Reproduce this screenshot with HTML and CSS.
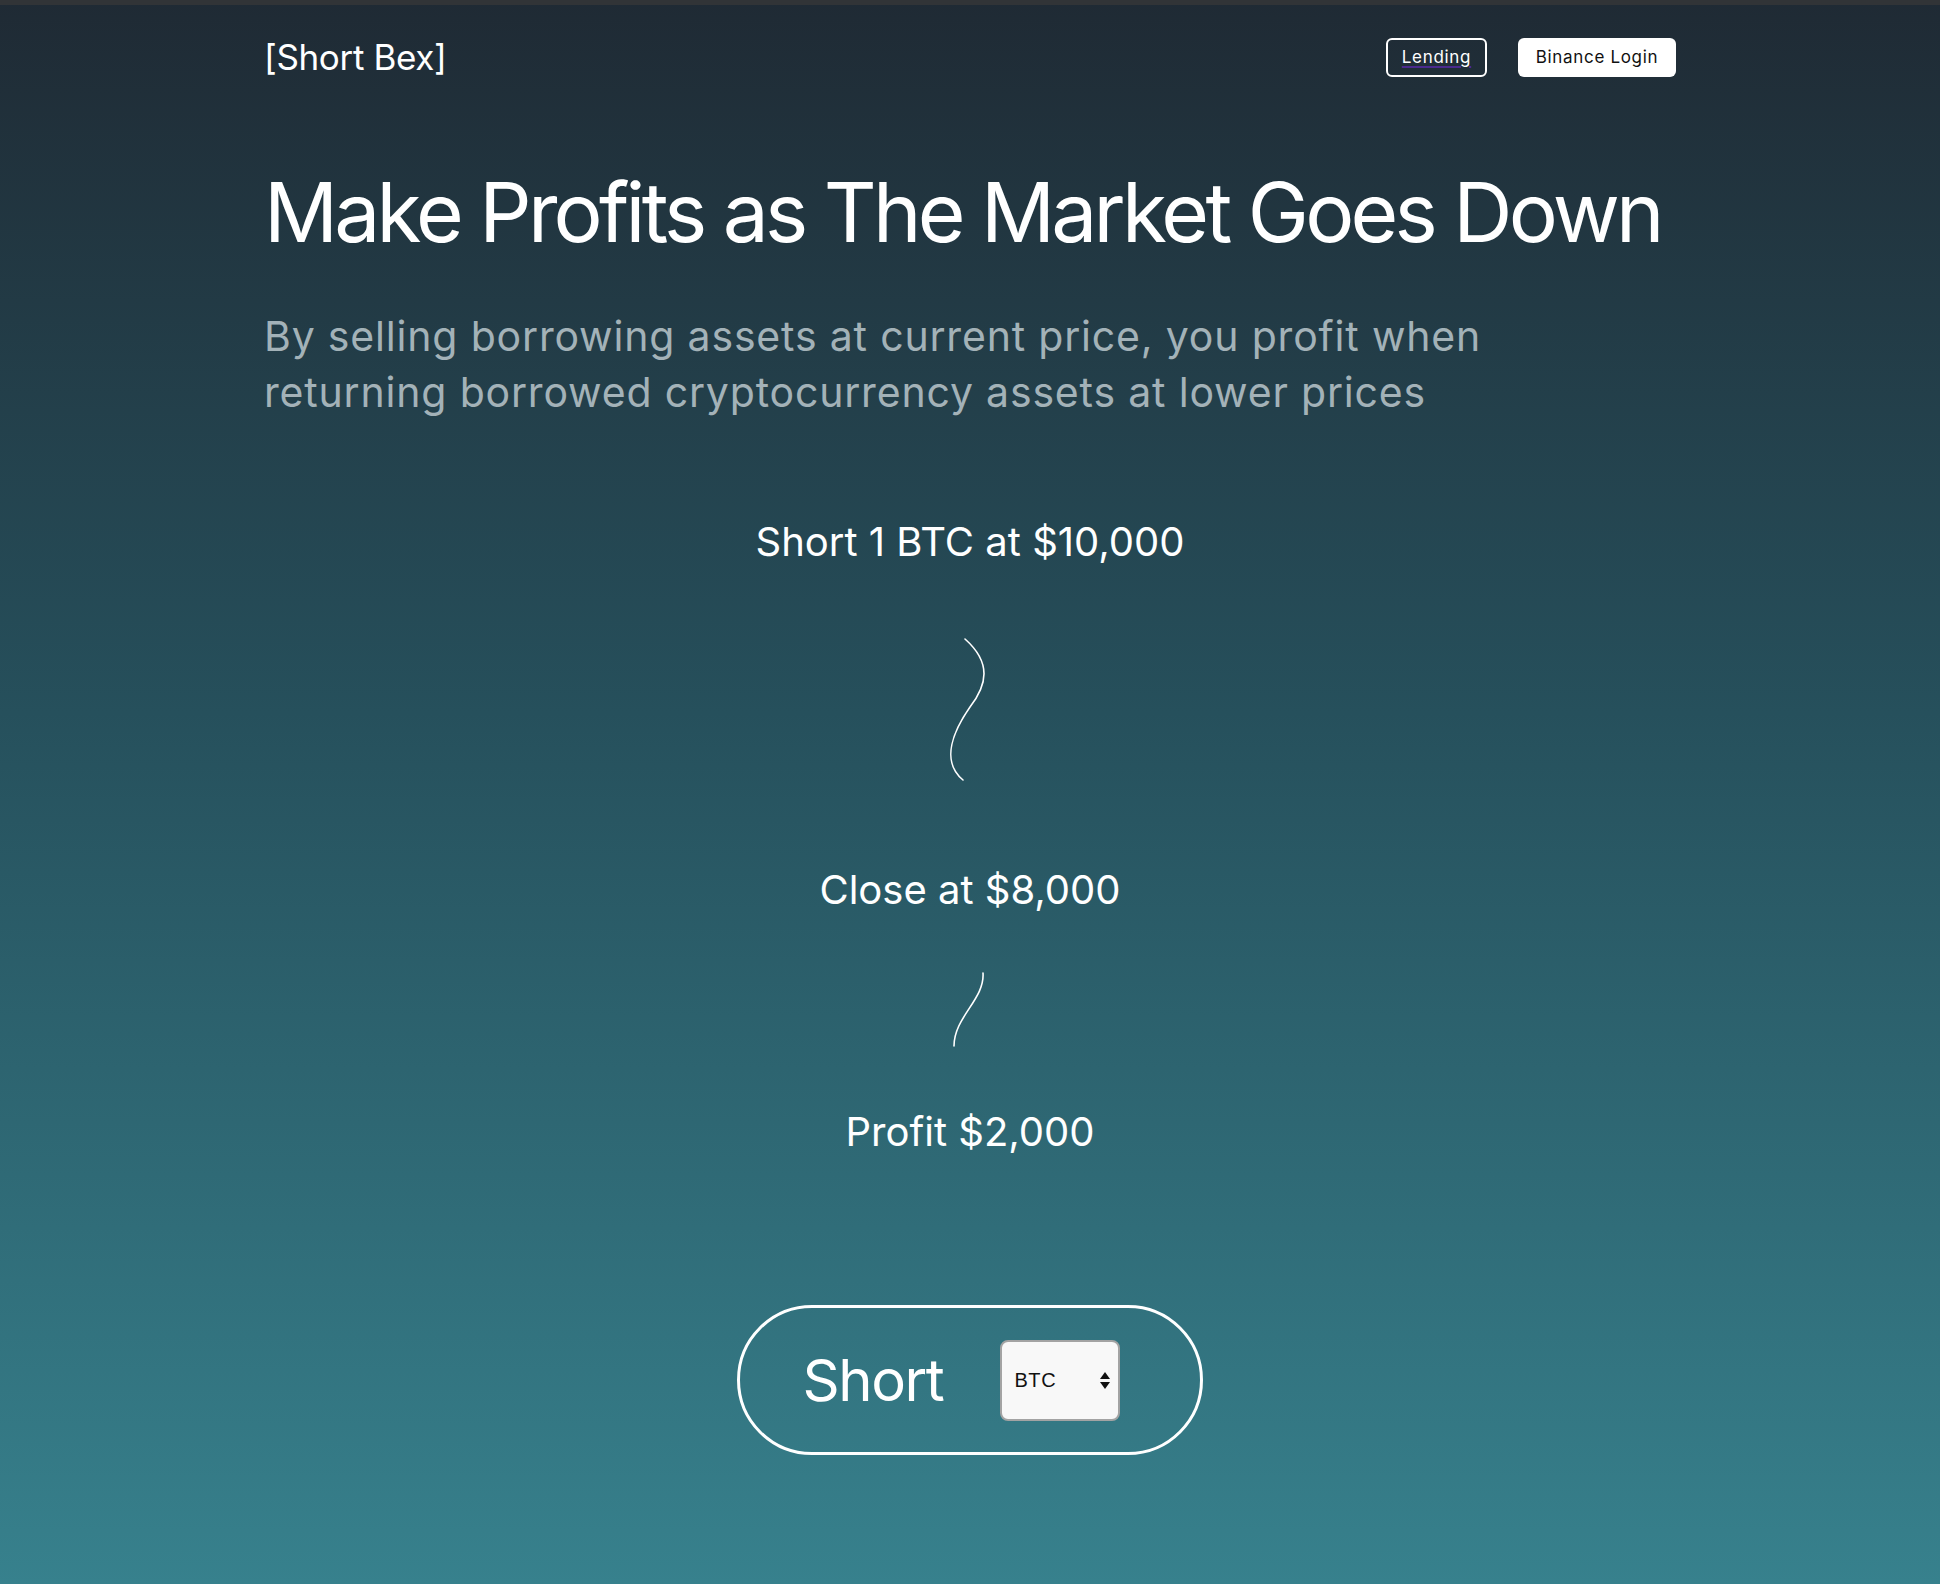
FILE: index.html
```html
<!DOCTYPE html>
<html lang="en">
  <head>
    <meta charset="UTF-8" />
    <meta name="viewport" content="width=device-width, initial-scale=1.0" />
    <title>Short Bex</title>
    <link rel="stylesheet" href="styles.css">
  </head>
  <body>
    <div class="container">
      <header class="top-bar">
        <div class="logo">[Short Bex]</div>
        <nav class="nav">
          <a href="#" class="nav-button outline">Lending</a>
          <a href="#" class="nav-button solid">Binance Login</a>
        </nav>
      </header>

      <h1 class="headline">Make Profits as The Market Goes Down</h1>
      <p class="subtitle">
        By selling borrowing assets at current price, you profit when
        returning borrowed cryptocurrency assets at lower prices
      </p>

      <div class="steps">
        <div class="step">Short 1 BTC at $10,000</div>
        <svg class="curve curve-long" width="60" height="150" viewBox="0 0 60 150">
          <path d="M25,4 C52,28 47,50 30,72 C14,95 0,126 23,145" />
        </svg>
        <div class="step step-close">Close at $8,000</div>
        <svg class="curve curve-short" width="60" height="82" viewBox="0 0 60 82">
          <path d="M43,4 C45,30 14,48 14,77" />
        </svg>
        <div class="step step-profit">Profit $2,000</div>
      </div>

      <div class="short-box">
        <span class="short-label">Short</span>
        <div class="coin-select">
          <select id="coin">
            <option value="BTC">BTC</option>
            <option value="ETH">ETH</option>
          </select>
          <svg class="select-arrows" width="10" height="18" viewBox="0 0 10 18">
            <path d="M5,0 L10,7 L0,7 Z" />
            <path d="M0,10 L10,10 L5,17 Z" />
          </svg>
        </div>
      </div>
    </div>
  </body>
</html>
```
FILE: styles.css
```css
* {
  margin: 0;
  padding: 0;
  box-sizing: border-box;
}

body {
  font-family: Inter, "Noto Sans", sans-serif;
  color: #fff;
  min-height: 100vh;
  background: linear-gradient(180deg, #1f2a34 0%, #26505c 45%, #37818d 100%);
  border-top: 5px solid #313437;
}

.container {
  width: 1412px;
  margin: 0 auto;
  padding-bottom: 100px;
}

.top-bar {
  display: flex;
  justify-content: space-between;
  align-items: center;
  padding-top: 31px;
}

.logo {
  font-size: 35px;
  font-weight: 400;
  letter-spacing: -0.01em;
}

.nav {
  display: flex;
  gap: 31px;
}

.nav-button {
  display: flex;
  align-items: center;
  justify-content: center;
  height: 39px;
  border-radius: 6px;
  font-size: 17px;
  letter-spacing: 0.04em;
  text-decoration: none;
}

.nav-button.outline {
  width: 101px;
  border: 2px solid #fff;
  color: #fff;
  text-decoration: underline;
  text-decoration-color: #4b2a8e;
  text-decoration-thickness: 2px;
  text-underline-offset: 3px;
}

.nav-button.solid {
  width: 158px;
  background: #fff;
  color: #111;
}

.headline {
  margin-top: 86px;
  font-size: 82px;
  font-weight: 400;
  line-height: 1.2;
  letter-spacing: -0.046em;
  white-space: nowrap;
}

.subtitle {
  margin-top: 46px;
  max-width: 1320px;
  font-size: 41px;
  line-height: 56px;
  letter-spacing: 0.02em;
  color: #a3b2b8;
}

.steps {
  display: flex;
  flex-direction: column;
  align-items: center;
  margin-top: 98px;
}

.step {
  font-size: 40px;
  line-height: 1.2;
}

.curve {
  display: block;
  fill: none;
  stroke: #fff;
  stroke-width: 1.6;
  stroke-linecap: round;
}

.curve-long {
  margin-top: 69px;
}

.step-close {
  margin-top: 81px;
}

.curve-short {
  margin-top: 55px;
}

.step-profit {
  margin-top: 57px;
}

.short-box {
  display: flex;
  align-items: center;
  width: fit-content;
  height: 150px;
  margin: 149px auto 0;
  padding: 0 80px 0 63px;
  border: 3px solid #fff;
  border-radius: 75px;
}

.short-label {
  font-size: 58px;
  line-height: 1;
  letter-spacing: -0.025em;
}

.coin-select {
  position: relative;
  margin-left: 57px;
}

.coin-select select {
  display: block;
  width: 120px;
  height: 81px;
  padding-left: 12px;
  appearance: none;
  -webkit-appearance: none;
  background: #f8f8f8;
  border: 2px solid #a3a3a3;
  border-radius: 8px;
  font-family: "Liberation Sans", Arial, sans-serif;
  font-size: 20px;
  letter-spacing: 0.03em;
  color: #111;
  outline: none;
}

.select-arrows {
  position: absolute;
  right: 10px;
  top: 32px;
  fill: #111;
  pointer-events: none;
}
```
